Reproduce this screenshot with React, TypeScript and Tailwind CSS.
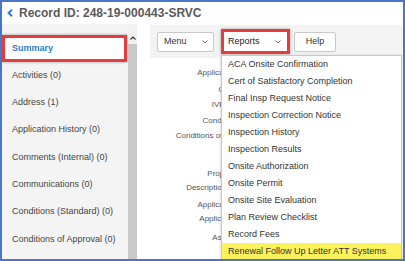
import React from 'react';

const sideItems = [
  'Activities (0)',
  'Address (1)',
  'Application History (0)',
  'Comments (Internal) (0)',
  'Communications (0)',
  'Conditions (Standard) (0)',
  'Conditions of Approval (0)',
];

// labels sit under the open dropdown, only their left part shows
const fieldLabels = [
  { text: 'Application Type:', cls: 'mt-[10px]' },
  { text: 'Contractor:', cls: 'mt-[7px]' },
  { text: 'IVR Number:', cls: 'mt-[5px]' },
  { text: 'Condition Type:', cls: 'mt-[6px]' },
  { text: 'Conditions of Approval:', cls: 'mt-[5px]' },
  { text: 'Project Name:', cls: 'mt-[28px]' },
  { text: 'Description of Work:', cls: 'mt-[4px]' },
  { text: 'Application Date:', cls: 'mt-[7px]' },
  { text: 'Applicant Name:', cls: 'mt-[4px]' },
  { text: 'Assigned To:', cls: 'mt-[9px]' },
];

const reports = [
  'ACA Onsite Confirmation',
  'Cert of Satisfactory Completion',
  'Final Insp Request Notice',
  'Inspection Correction Notice',
  'Inspection History',
  'Inspection Results',
  'Onsite Authorization',
  'Onsite Permit',
  'Onsite Site Evaluation',
  'Plan Review Checklist',
  'Record Fees',
  'Renewal Follow Up Letter ATT Systems',
];

const Caret: React.FC = () => (
  <svg width="6" height="4" viewBox="0 0 6 4" className="shrink-0">
    <path d="M0.5 0.5 L3 3 L5.5 0.5" stroke="#777" strokeWidth="1" fill="none" />
  </svg>
);

const App: React.FC = () => {
  return (
    <div className="w-[405px] h-[261px] border-2 border-[#4a76c8] bg-white overflow-hidden flex flex-col font-['Liberation_Sans',Arial,sans-serif]">
      {/* header */}
      <div className="h-[22px] shrink-0 flex items-center pl-[5px]">
        <svg width="6" height="8" viewBox="0 0 6 8" className="shrink-0">
          <path d="M5 0.8 L1.6 4 L5 7.2" stroke="#2d7dd2" strokeWidth="2" fill="none" />
        </svg>
        <span className="ml-[6px] text-[12px] font-bold text-[#5a5a5a] leading-none">
          Record ID: 248-19-000443-SRVC
        </span>
      </div>

      <div className="flex flex-1 min-h-0">
        {/* left nav */}
        <div className="w-[126px] shrink-0 bg-[#f4f4f4] pt-[11px] flex flex-col">
          <div className="w-[125px] h-[27px] shrink-0 border-[3px] border-[#e43d3d] bg-white pl-[7px] flex items-center text-[9px] font-bold text-[#2b7fca] shadow-[0_0_3px_rgba(0,0,0,0.35)]">
            Summary
          </div>
          {sideItems.map((item) => (
            <div key={item} className="h-[27.3px] shrink-0 flex items-center pl-[10px] text-[9px] text-[#444]">
              {item}
            </div>
          ))}
        </div>

        {/* scrollbar */}
        <div className="w-[9px] shrink-0 flex flex-col">
          <div className="h-[20px] bg-[#f1f1f1] flex items-end justify-center pb-[4px]">
            <svg width="6" height="4" viewBox="0 0 6 4">
              <path d="M0.5 3.5 L3 1 L5.5 3.5" stroke="#333" strokeWidth="1.2" fill="none" />
            </svg>
          </div>
          <div className="flex-1 bg-[#c9c9c9]" />
        </div>

        {/* main */}
        <div className="flex-1 relative bg-white">
          <div className="ml-[13px] mt-[1px] h-[33px] bg-[#f3f3f3] flex items-start pt-[7px] pl-[7px]">
            <div className="w-[57px] h-[20px] bg-white border border-[#c9c9c9] rounded-[2px] flex items-center justify-between pl-[6px] pr-[5px] text-[9px] text-[#333]">
              <span>Menu</span>
              <Caret />
            </div>
            <div className="ml-[7px] -mt-[3px] border-[3px] border-[#e43d3d] shadow-[0_0_3px_rgba(0,0,0,0.3)]">
              <div className="w-[63px] h-[19px] bg-white flex items-center justify-between pl-[4px] pr-[6px] text-[9px] text-[#222]">
                <span>Reports</span>
                <Caret />
              </div>
            </div>
            <div className="ml-[4px] w-[42px] h-[20px] bg-white border border-[#c9c9c9] rounded-[2px] flex items-center justify-center text-[9px] text-[#333]">
              Help
            </div>
          </div>

          {/* field labels, clipped where the open menu covers them */}
          <div className="w-[84px] overflow-hidden">
            <div className="w-[121px] flex flex-col items-end text-[8px] text-[#555]">
              {fieldLabels.map((f) => (
                <div key={f.text} className={`h-[10px] leading-[10px] whitespace-nowrap ${f.cls}`}>
                  {f.text}
                </div>
              ))}
            </div>
          </div>

          {/* reports dropdown */}
          <div className="absolute left-[84px] top-[31px] w-[181px] h-[210px] bg-white border border-[#c8c8c8] shadow-[0_1px_3px_rgba(0,0,0,0.2)]">
            {reports.map((r, i) => (
              <div
                key={r}
                className={
                  i === reports.length - 1
                    ? 'h-[17px] flex items-center pl-[6px] text-[9px] text-[#333] whitespace-nowrap bg-[#fbf25c]'
                    : 'h-[17px] flex items-center pl-[6px] text-[9px] text-[#333] whitespace-nowrap'
                }
              >
                {r}
              </div>
            ))}
          </div>
        </div>
      </div>
    </div>
  );
};

export default App;
